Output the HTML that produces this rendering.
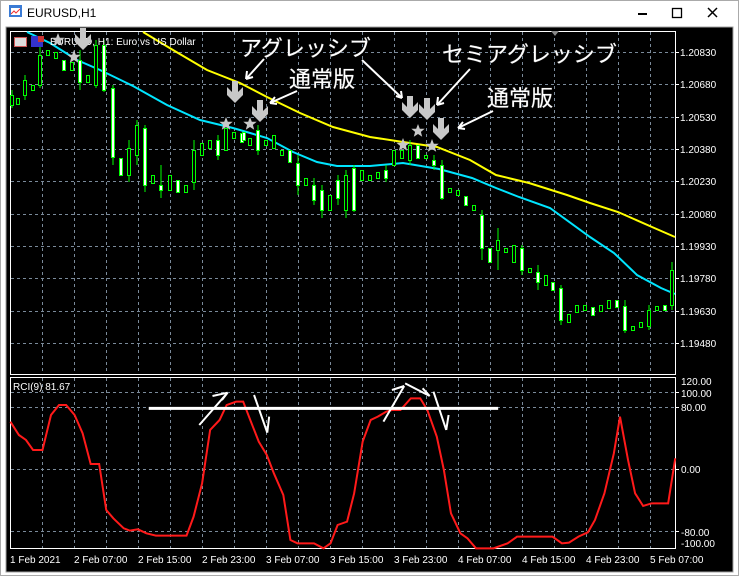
<!DOCTYPE html>
<html><head><meta charset="utf-8"><style>
html,body{margin:0;padding:0;background:#fff;width:739px;height:576px;overflow:hidden}
svg{display:block}
text{font-family:"Liberation Sans",sans-serif}
.jp{font-family:"Liberation Sans","Noto Sans CJK JP",sans-serif;font-size:22px;fill:#fff;stroke:#555;stroke-width:0.6px;paint-order:stroke}
.pl{font-size:10px;fill:#fff}
</style></head><body>
<svg width="739" height="576" viewBox="0 0 739 576" xmlns="http://www.w3.org/2000/svg">
<defs>
<path id="da" d="M-3,-14 L3,-14 L3,-3 L8,-8 L8,0 L0,8 L-8,0 L-8,-8 L-3,-3 Z" fill="#c8c8c8"/>
<polygon id="st" points="0,-7 1.8,-2.3 6.7,-2.2 2.9,0.9 4.2,5.7 0,3 -4.2,5.7 -2.9,0.9 -6.7,-2.2 -1.8,-2.3" fill="#c8c8c8"/>
</defs>
<!-- window -->
<rect x="0" y="0" width="739" height="576" fill="#fff"/>
<rect x="0.5" y="0.5" width="738" height="575" fill="none" stroke="#aaa"/>
<rect x="9" y="5" width="13" height="12" fill="#3a7bd5"/><rect x="11" y="8" width="9" height="7" fill="#fff"/><path d="M11,14 L14,11 L16,13 L20,9" stroke="#e33" fill="none"/>
<text x="27" y="17" font-size="12" fill="#000">EURUSD,H1</text>
<rect x="638" y="13" width="9" height="2" fill="#000"/>
<rect x="672.5" y="8.5" width="9" height="9" fill="none" stroke="#000" stroke-width="1.3"/>
<path d="M708,8 L717,17 M717,8 L708,17" stroke="#000" stroke-width="1.5"/>
<rect x="6" y="27" width="727" height="545" fill="#000"/>
<rect x="6" y="27" width="727" height="545" fill="none" stroke="#a0a0a0"/>
<!-- main box -->
<rect x="10.5" y="31.5" width="665" height="343" fill="none" stroke="#fff"/>
<rect x="10.5" y="377.5" width="665" height="171" fill="none" stroke="#fff"/>
<g stroke="#7a8a9a" stroke-dasharray="3,3" stroke-width="1">
<path d="M11,52.5H675M11,84.5H675M11,117.5H675M11,149.5H675M11,181.5H675M11,214.5H675M11,246.5H675M11,278.5H675M11,311.5H675M11,343.5H675"/>
<path d="M42.5,32V374M74.5,32V374M106.5,32V374M138.5,32V374M170.5,32V374M202.5,32V374M234.5,32V374M266.5,32V374M298.5,32V374M330.5,32V374M362.5,32V374M394.5,32V374M426.5,32V374M458.5,32V374M490.5,32V374M522.5,32V374M554.5,32V374M586.5,32V374M618.5,32V374M650.5,32V374"/>
<path d="M11,392.5H675M11,407.5H675M11,469.5H675M11,531.5H675"/>
<path d="M42.5,378V548M74.5,378V548M106.5,378V548M138.5,378V548M170.5,378V548M202.5,378V548M234.5,378V548M266.5,378V548M298.5,378V548M330.5,378V548M362.5,378V548M394.5,378V548M426.5,378V548M458.5,378V548M490.5,378V548M522.5,378V548M554.5,378V548M586.5,378V548M618.5,378V548M650.5,378V548"/>
</g>
<!-- price labels -->
<g stroke="#fff"><path d="M675,52.5h4M675,84.5h4M675,117.5h4M675,149.5h4M675,181.5h4M675,214.5h4M675,246.5h4M675,278.5h4M675,311.5h4M675,343.5h4M675,392.5h4M675,407.5h4M675,469.5h4M675,531.5h4"/></g>
<g class="pl">
<text x="680" y="56">1.20830</text><text x="680" y="88">1.20680</text><text x="680" y="121">1.20530</text><text x="680" y="153">1.20380</text><text x="680" y="185">1.20230</text><text x="680" y="218">1.20080</text><text x="680" y="250">1.19930</text><text x="680" y="282">1.19780</text><text x="680" y="315">1.19630</text><text x="680" y="347">1.19480</text>
<text x="681" y="385">120.00</text><text x="681" y="397">100.00</text><text x="681" y="411">80.00</text><text x="681" y="473">0.00</text><text x="681" y="536">-80.00</text><text x="681" y="547">-100.00</text>
<text x="10" y="563">1 Feb 2021</text><text x="74" y="563">2 Feb 07:00</text><text x="138" y="563">2 Feb 15:00</text><text x="202" y="563">2 Feb 23:00</text><text x="266" y="563">3 Feb 07:00</text><text x="330" y="563">3 Feb 15:00</text><text x="394" y="563">3 Feb 23:00</text><text x="458" y="563">4 Feb 07:00</text><text x="522" y="563">4 Feb 15:00</text><text x="586" y="563">4 Feb 23:00</text><text x="650" y="563">5 Feb 07:00</text>
<text x="13" y="390">RCI(9) 81.67</text>
</g>
<polygon points="551,31 559,31 555,36" fill="#888"/>
<!-- MAs -->
<polyline fill="none" stroke="#ffff00" stroke-width="2" points="143,32 173,50 207,70 240,83 267,97 300,113 333,127 370,137 403,142 437,147 470,160 496,175 529,183 567,195 590,203 618,212 652,227 675,237"/>
<polyline fill="none" stroke="#00e5ff" stroke-width="2" points="27,32 50,43 77,60 100,70 133,86 167,105 200,120 233,128 267,138 293,152 317,162 337,166 370,166 403,163 439,169 472,178 496,188 519,197 550,208 590,237 614,253 637,275 661,288 675,294"/>
<!-- candles -->
<g stroke="#00ff00" stroke-width="1">
<path d="M12,90V108M25,75V100M40,45V88M80,50V90M96,40V88M104,40V92M113,85V165M129,140V182M137,120V165M145,125V192M161,165V198M194,140V190M298,155V195M314,178V205M322,185V218M338,175V205M346,170V218M354,165V212M410,140V165M442,160V200M482,210V260M498,228V270M522,245V275M561,285V325M672,262V310M218,135V160M258,125V155M386,165V182M434,155V170M538,265V290M625,300V333M649,305V330"/>
<g fill="#fff">
<rect x="62.5" y="60.5" width="3" height="10"/><rect x="78.5" y="60.5" width="3" height="22"/><rect x="102.5" y="45.5" width="3" height="45"/><rect x="111.5" y="88.5" width="3" height="69"/><rect x="119.5" y="158.5" width="3" height="17"/><rect x="143.5" y="128.5" width="3" height="57"/><rect x="159.5" y="185.5" width="3" height="5"/><rect x="216.5" y="140.5" width="3" height="15"/><rect x="240.5" y="133.5" width="3" height="9"/><rect x="256.5" y="130.5" width="3" height="20"/><rect x="288.5" y="150.5" width="3" height="12"/><rect x="296.5" y="163.5" width="3" height="22"/><rect x="312.5" y="185.5" width="3" height="15"/><rect x="320.5" y="190.5" width="3" height="20"/><rect x="336.5" y="180.5" width="3" height="18"/><rect x="352.5" y="168.5" width="3" height="42"/><rect x="384.5" y="170.5" width="3" height="8"/><rect x="416.5" y="145.5" width="3" height="13"/><rect x="432.5" y="160.5" width="3" height="5"/><rect x="440.5" y="165.5" width="3" height="33"/><rect x="464.5" y="196.5" width="3" height="9"/><rect x="480.5" y="215.5" width="3" height="33"/><rect x="488.5" y="248.5" width="3" height="14"/><rect x="520.5" y="248.5" width="3" height="22"/><rect x="536.5" y="272.5" width="3" height="10"/><rect x="551.5" y="282.5" width="3" height="8"/><rect x="559.5" y="288.5" width="3" height="32"/><rect x="591.5" y="307.5" width="3" height="8"/><rect x="615.5" y="300.5" width="3" height="7"/><rect x="623.5" y="306.5" width="3" height="24"/><rect x="663.5" y="305.5" width="3" height="5"/><rect x="176.5" y="180.5" width="3" height="12"/><rect x="242.5" y="132.5" width="3" height="8"/>
</g>
<g fill="#000">
<rect x="10.5" y="95.5" width="3" height="10"/><rect x="16.5" y="98.5" width="3" height="6"/><rect x="23.5" y="80.5" width="3" height="15"/><rect x="31.5" y="85.5" width="3" height="5"/><rect x="38.5" y="55.5" width="3" height="30"/><rect x="46.5" y="50.5" width="3" height="5"/><rect x="54.5" y="52.5" width="3" height="6"/><rect x="70.5" y="62.5" width="3" height="8"/><rect x="86.5" y="75.5" width="3" height="7"/><rect x="94.5" y="45.5" width="3" height="40"/><rect x="127.5" y="148.5" width="3" height="27"/><rect x="135.5" y="125.5" width="3" height="30"/><rect x="151.5" y="175.5" width="3" height="8"/><rect x="168.5" y="175.5" width="3" height="15"/><rect x="184.5" y="185.5" width="3" height="7"/><rect x="192.5" y="150.5" width="3" height="32"/><rect x="200.5" y="143.5" width="3" height="12"/><rect x="208.5" y="140.5" width="3" height="8"/><rect x="224.5" y="128.5" width="3" height="22"/><rect x="232.5" y="132.5" width="3" height="6"/><rect x="248.5" y="138.5" width="3" height="7"/><rect x="264.5" y="140.5" width="3" height="5"/><rect x="272.5" y="135.5" width="3" height="13"/><rect x="280.5" y="150.5" width="3" height="5"/><rect x="304.5" y="178.5" width="3" height="7"/><rect x="328.5" y="195.5" width="3" height="15"/><rect x="344.5" y="175.5" width="3" height="35"/><rect x="360.5" y="170.5" width="3" height="10"/><rect x="368.5" y="175.5" width="3" height="5"/><rect x="376.5" y="172.5" width="3" height="6"/><rect x="392.5" y="150.5" width="3" height="15"/><rect x="400.5" y="150.5" width="3" height="8"/><rect x="408.5" y="145.5" width="3" height="15"/><rect x="424.5" y="155.5" width="3" height="3"/><rect x="448.5" y="188.5" width="3" height="4"/><rect x="456.5" y="190.5" width="3" height="5"/><rect x="472.5" y="205.5" width="3" height="5"/><rect x="496.5" y="240.5" width="3" height="10"/><rect x="504.5" y="248.5" width="3" height="4"/><rect x="512.5" y="245.5" width="3" height="17"/><rect x="528.5" y="268.5" width="3" height="4"/><rect x="544.5" y="275.5" width="3" height="10"/><rect x="567.5" y="314.5" width="3" height="8"/><rect x="575.5" y="305.5" width="3" height="7"/><rect x="583.5" y="305.5" width="3" height="5"/><rect x="599.5" y="305.5" width="3" height="6"/><rect x="607.5" y="300.5" width="3" height="8"/><rect x="631.5" y="326.5" width="3" height="4"/><rect x="639.5" y="322.5" width="3" height="5"/><rect x="647.5" y="310.5" width="3" height="16"/><rect x="655.5" y="306.5" width="3" height="4"/><rect x="670.5" y="270.5" width="3" height="35"/>
</g>
</g>
<!-- header in chart -->
<rect x="14" y="37" width="13" height="10" fill="#c55"/><rect x="15" y="38" width="11" height="8" fill="#ddd"/>
<rect x="31" y="36" width="12" height="11" fill="#33c"/><rect x="38" y="36" width="6" height="6" fill="#c33"/>
<text x="50" y="45" font-size="10" fill="#fff">EURUSD, H1:  Euro vs US Dollar</text>
<!-- symbols -->
<use href="#da" x="83" y="42"/><use href="#st" x="58" y="40"/><use href="#st" x="74" y="57"/>
<use href="#da" x="235" y="95"/><use href="#da" x="260" y="114"/>
<use href="#st" x="226" y="124"/><use href="#st" x="250" y="124"/>
<use href="#da" x="410" y="110"/><use href="#da" x="427" y="112"/><use href="#da" x="441" y="132"/>
<use href="#st" x="418" y="131"/><use href="#st" x="403" y="145"/><use href="#st" x="432" y="146"/>
<!-- annotations -->
<text class="jp" x="240" y="56">アグレッシブ</text>
<text class="jp" x="289" y="87">通常版</text>
<text class="jp" x="442" y="62">セミアグレッシブ</text>
<text class="jp" x="487" y="106">通常版</text>
<g stroke="#fff" stroke-width="2" fill="none">
<path d="M264,59 L246,79 M246,79 L247,71 M246,79 L253,77"/>
<path d="M297,91 L270,103 M270,103 L275,97 M270,103 L277,104"/>
<path d="M362,60 L402,98 M402,98 L396,96 M402,98 L401,91"/>
<path d="M470,69 L437,105 M437,105 L438,97 M437,105 L444,103"/>
<path d="M493,111 L458,128 M458,128 L463,122 M458,128 L465,129"/>
</g>
<!-- RCI -->
<g transform="translate(0,370) scale(0.4722,0.3333)">
<polyline fill="none" stroke="#ff1a1a" stroke-width="2" vector-effect="non-scaling-stroke" points="22,155 40,195 55,210 70,240 90,240 108,135 125,105 140,105 158,135 175,190 192,282 210,282 225,420 240,445 262,475 275,482 292,478 310,490 330,497 395,497 410,440 428,340 445,180 465,150 480,105 500,95 515,95 530,150 548,215 565,255 580,310 600,375 615,510 630,520 665,520 685,535 700,520 715,465 735,455 750,370 768,215 785,150 800,140 818,125 830,120 848,120 870,85 890,85 905,120 925,200 940,300 955,430 975,490 990,505 1008,535 1045,535 1075,520 1095,500 1170,500 1190,520 1205,518 1225,500 1245,487 1260,450 1280,370 1300,250 1313,140 1330,270 1345,370 1362,408 1380,400 1415,400 1430,265"/>
<g stroke="#fff" stroke-width="2" fill="none" vector-effect="non-scaling-stroke">
<path vector-effect="non-scaling-stroke" d="M315,115 L1055,115" stroke-width="3"/>
<path vector-effect="non-scaling-stroke" d="M422,165 L482,68 M482,68 L450,78 M470,90 L482,68"/>
<path vector-effect="non-scaling-stroke" d="M538,75 L566,188 M566,188 L570,140"/>
<path vector-effect="non-scaling-stroke" d="M812,155 L856,48 M856,48 L830,60"/>
<path vector-effect="non-scaling-stroke" d="M858,40 L910,78 M910,78 L895,55"/>
<path vector-effect="non-scaling-stroke" d="M918,65 L945,180 M945,180 L950,135"/>
</g>
</g>
</svg>
</body></html>
